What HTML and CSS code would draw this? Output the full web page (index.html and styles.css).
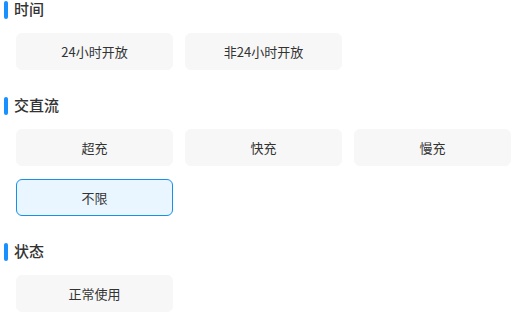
FILE: index.html
```html
<!DOCTYPE html>
<html>
<head>
<meta charset="utf-8">
<link rel="stylesheet" href="styles.css">
</head>
<body>
<div class="page">
  <section class="group">
    <div class="title">时间</div>
    <div class="options">
      <div class="opt">24小时开放</div>
      <div class="opt">非24小时开放</div>
    </div>
  </section>
  <section class="group">
    <div class="title">交直流</div>
    <div class="options">
      <div class="opt">超充</div>
      <div class="opt">快充</div>
      <div class="opt">慢充</div>
      <div class="opt active">不限</div>
    </div>
  </section>
  <section class="group">
    <div class="title">状态</div>
    <div class="options">
      <div class="opt">正常使用</div>
    </div>
  </section>
</div>
</body>
</html>
```
FILE: styles.css
```css
html, body {
  margin: 0;
  padding: 0;
  background: #ffffff;
}
body {
  font-family: "Noto Sans CJK SC", "Noto Sans", sans-serif;
  color: #333333;
}
.page {
  width: 512px;
}
.group {
  margin-bottom: 26px;
}
.title {
  position: relative;
  padding-left: 14px;
  height: 18px;
  line-height: 18px;
  font-size: 15px;
  font-weight: 500;
  color: #333333;
}
.title::before {
  content: "";
  position: absolute;
  left: 4px;
  top: 1px;
  width: 4px;
  height: 18px;
  border-radius: 2px;
  background: #1890ff;
}
.options {
  margin-top: 15px;
  padding-left: 16px;
  display: grid;
  grid-template-columns: repeat(3, 157px);
  column-gap: 12px;
  row-gap: 13px;
}
.opt {
  box-sizing: border-box;
  height: 37px;
  border-radius: 6px;
  background: #f7f7f7;
  border: 1px solid #f7f7f7;
  display: flex;
  align-items: center;
  justify-content: center;
  font-size: 13px;
  color: #333333;
}
.opt.active {
  background: #eaf6ff;
  border-color: #1890e8;
}
```
